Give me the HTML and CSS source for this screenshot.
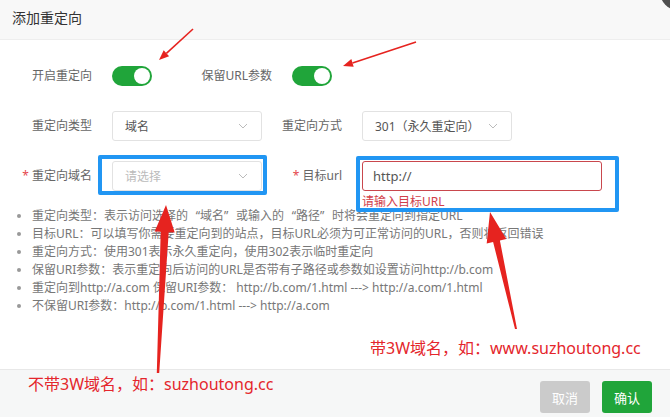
FILE: index.html
```html
<!DOCTYPE html>
<html lang="zh-CN">
  <head>
    <meta charset="UTF-8" />
    <meta name="viewport" content="width=device-width, initial-scale=1.0" />
    <title>添加重定向</title>
    <link rel="stylesheet" href="styles.css">
  </head>
  <body>
    <div class="layer">
      <span class="layer-close"></span>
      <div class="layer-title">添加重定向</div>

      <div class="layer-content">
        <div class="form-row">
          <div class="form-item spaced">
            <label class="form-label">开启重定向</label>
            <span class="switch"><span class="knob"></span></span>
          </div>
          <div class="form-item">
            <label class="form-label">保留URL参数</label>
            <span class="switch"><span class="knob"></span></span>
          </div>
        </div>

        <div class="form-row">
          <div class="form-item">
            <label class="form-label">重定向类型</label>
            <div class="select">
              <span>域名</span>
              <svg width="10" height="6" viewBox="0 0 10 6"><polyline points="1,1 5,5 9,1" /></svg>
            </div>
          </div>
          <div class="form-item">
            <label class="form-label">重定向方式</label>
            <div class="select">
              <span>301（永久重定向）</span>
              <svg width="10" height="6" viewBox="0 0 10 6"><polyline points="1,1 5,5 9,1" /></svg>
            </div>
          </div>
        </div>

        <div class="form-row">
          <div class="form-item">
            <label class="form-label required">重定向域名</label>
            <div class="select empty">
              <span>请选择</span>
              <svg width="10" height="6" viewBox="0 0 10 6"><polyline points="1,1 5,5 9,1" /></svg>
            </div>
          </div>
          <div class="form-item">
            <label class="form-label required">目标url</label>
            <div class="field">
              <div class="input has-error">http://</div>
              <div class="form-error">请输入目标URL</div>
            </div>
          </div>
        </div>

        <ul class="tips">
          <li>重定向类型：表示访问选择的<span class="q">“</span>域名<span class="q">”</span>或输入的<span class="q">“</span>路径<span class="q">”</span>时将会重定向到指定URL</li>
          <li>目标URL：可以填写你需要重定向到的站点，目标URL必须为可正常访问的URL，否则将返回错误</li>
          <li>重定向方式：使用301表示永久重定向，使用302表示临时重定向</li>
          <li>保留URI参数：表示重定向后访问的URL是否带有子路径或参数如设置访问http://b.com</li>
          <li>重定向到http://a.com 保留URI参数： http://b.com/1.html ---&gt; http://a.com/1.html</li>
          <li>不保留URI参数：http://b.com/1.html ---&gt; http://a.com</li>
        </ul>
      </div>

      <div class="layer-footer">
        <button class="btn btn-cancel">取消</button>
        <button class="btn btn-ok">确认</button>
      </div>

      <!-- 标注 -->
      <div class="mark-box box-domain"></div>
      <div class="mark-box box-target"></div>
      <svg class="mark-arrows" width="670" height="417" viewBox="0 0 670 417">
        <line x1="193" y1="29" x2="166.4" y2="53.3" />
        <polygon points="159,60 169.1,56.2 163.7,50.3" />
        <line x1="416" y1="42" x2="352.5" y2="62.9" />
        <polygon points="343,66 353.7,66.7 351.3,59.1" />
        <polygon points="166,205 174.7,232.5 168.7,232.2 159.2,373 156.8,373 160.7,231.8 154.7,231.5" />
        <polygon points="490,212 506.3,239.1 499.9,240.5 517,329 515,329 493.1,242 486.7,243.5" />
      </svg>
      <div class="mark-text text-www">带3W域名，如：www.suzhoutong.cc</div>
      <div class="mark-text text-plain">不带3W域名，如：suzhoutong.cc</div>
    </div>
  </body>
</html>
```

FILE: styles.css
```css
body {
  margin: 0;
  overflow: hidden;
  font-family: "Noto Sans", "Noto Sans CJK SC", sans-serif;
  font-size: 12px;
  color: #666;
  background: #fff;
}

.layer {
  position: relative;
  width: 670px;
  height: 417px;
  overflow: hidden;
}

.layer-close {
  position: absolute;
  top: -26px;
  right: -26px;
  width: 36px;
  height: 36px;
  border-radius: 50%;
  background: #4f4f4f;
}

.layer-title {
  height: 39px;
  line-height: 35px;
  padding-left: 12px;
  font-size: 14px;
  color: #333;
  background: #f8f8f8;
  border-bottom: 1px solid #eee;
}

.layer-content {
  height: 329px;
  box-sizing: border-box;
  padding: 21px 12px 0;
}

.form-row {
  display: flex;
  align-items: flex-start;
  margin-bottom: 20px;
}

.form-item {
  display: flex;
  align-items: flex-start;
}

.form-item.spaced {
  margin-right: 40px;
}

.form-label {
  width: 100px;
  box-sizing: border-box;
  padding-right: 20px;
  text-align: right;
  line-height: 30px;
  color: #666;
}

.form-label.required::before {
  content: "* ";
  color: #e5484d;
}

.switch {
  display: flex;
  justify-content: flex-end;
  box-sizing: border-box;
  width: 40px;
  height: 20px;
  margin-top: 5px;
  padding: 2px;
  border-radius: 10px;
  background: #20a53a;
}

.knob {
  width: 16px;
  height: 16px;
  border-radius: 50%;
  background: #fff;
}

.select {
  display: flex;
  align-items: center;
  justify-content: space-between;
  width: 150px;
  height: 30px;
  box-sizing: border-box;
  padding: 0 13px 0 12px;
  border: 1px solid #e2e2e2;
  border-radius: 3px;
  color: #555;
}

.select svg polyline {
  fill: none;
  stroke: #bbb;
  stroke-width: 1;
}

.select.empty {
  color: #bbb;
}

.input {
  width: 240px;
  height: 30px;
  box-sizing: border-box;
  padding-left: 10px;
  line-height: 28px;
  border: 1px solid #ddd;
  border-radius: 3px;
  font-size: 13px;
  color: #555;
}

.input.has-error {
  border-color: #c9474d;
}

.form-error {
  margin-top: 3px;
  line-height: 16px;
  font-size: 12px;
  color: #d2404a;
}

.tips {
  margin: -23px 0 0;
  padding-left: 20px;
  line-height: 18px;
  color: #777;
}

.tips li::marker {
  color: #999;
}

/* 中文引号按全角显示 */
.tips .q {
  display: inline-block;
  width: 12px;
}

.tips .q:nth-of-type(odd) {
  text-align: right;
}

.layer-footer {
  display: flex;
  justify-content: flex-end;
  gap: 12px;
  height: 60px;
  padding: 11px 18px 0;
  background: #f6f7f7;
  border-top: 1px solid #e8e8e8;
}

.btn {
  width: 50px;
  height: 32px;
  border: none;
  border-radius: 3px;
  font-family: inherit;
  font-size: 13px;
  color: #fff;
}

.btn-cancel {
  background: #cbcbcb;
}

.btn-ok {
  background: #20a53a;
}

/* 标注 */
.mark-box {
  position: absolute;
  box-sizing: border-box;
  border: 4px solid #2196f3;
  border-radius: 2px;
}

.box-domain {
  left: 98px;
  top: 155px;
  width: 169px;
  height: 40px;
}

.box-target {
  left: 356px;
  top: 156px;
  width: 263px;
  height: 56px;
}

.mark-arrows {
  position: absolute;
  left: 0;
  top: 0;
  pointer-events: none;
}

.mark-arrows line {
  stroke: #e6231f;
  stroke-width: 1.6;
}

.mark-arrows polygon {
  fill: #e6231f;
}

.mark-text {
  position: absolute;
  font-size: 16px;
  line-height: 20px;
  color: #e4262c;
  white-space: nowrap;
}

.text-www {
  left: 370px;
  top: 338px;
}

.text-plain {
  left: 28px;
  top: 374px;
}
```
